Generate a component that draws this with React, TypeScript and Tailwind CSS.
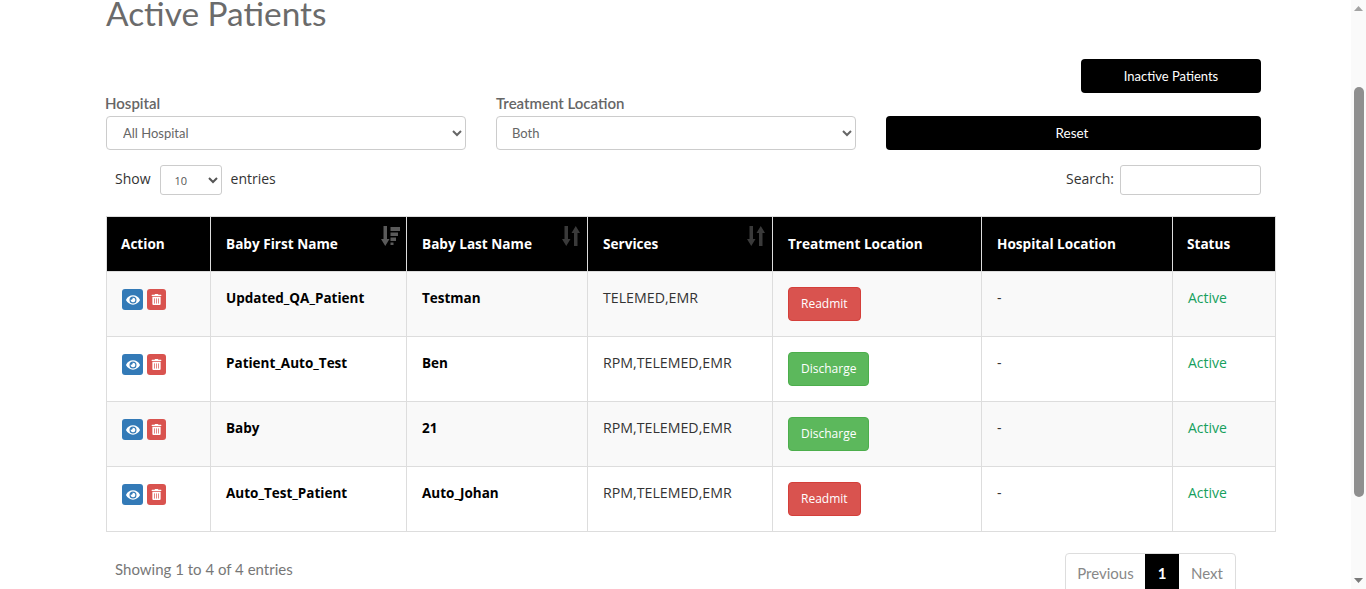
import { FaEye, FaTrashAlt } from 'react-icons/fa';

const rows = [
  { first: 'Updated_QA_Patient', last: 'Testman', services: 'TELEMED,EMR', action: 'Readmit' },
  { first: 'Patient_Auto_Test', last: 'Ben', services: 'RPM,TELEMED,EMR', action: 'Discharge' },
  { first: 'Baby', last: '21', services: 'RPM,TELEMED,EMR', action: 'Discharge' },
  { first: 'Auto_Test_Patient', last: 'Auto_Johan', services: 'RPM,TELEMED,EMR', action: 'Readmit' },
];

function SortIcon() {
  return (
    <svg width="18" height="20" viewBox="0 0 18 20" fill="#3a3a3a">
      <path d="M2.500 0h3.500v13h2.500l-4.250 7L0 13h2.500z" />
      <path d="M12 20h3.500V7H18l-4.250-7L9.500 7H12z" />
    </svg>
  );
}

function SortDownIcon() {
  return (
    <svg width="19" height="20" viewBox="0 0 19 20" fill="#5a5a5a">
      <path d="M2.500 0h3.500v13h2.500l-4.250 7L0 13h2.500z" />
      <path d="M9.500 1H19v4H9.500zM9.500 6.500h7.500v3.500H9.500zM9.500 11.500h5.500V15H9.500zM9.500 16.500h3V19h-3z" />
    </svg>
  );
}

export default function App() {
  return (
    <div className="flex h-[589px] overflow-hidden bg-white font-['Open_Sans',sans-serif] text-[14px] text-[#333]">
      <main className="flex-1 min-w-0 pl-[106px] pr-[75px]">
        <h1 className="-mt-[10px] h-[60px] font-['Lato',sans-serif] text-[33.4px] leading-[46px] text-[#6b6b6b]">Active Patients</h1>

        <div className="flex justify-end pr-[15px] mt-[9px]">
          <button className="h-[34px] w-[180px] rounded bg-black pt-[1px] font-['Lato',sans-serif] text-[13px] text-white">Inactive Patients</button>
        </div>

        <div className="mt-[1px] flex gap-[30px] pr-[15px] font-['Lato',sans-serif]">
          <div className="w-[360px]">
            <label className="-ml-[1px] -mt-[2px] mb-[2px] block h-[22px] text-[15px] font-semibold leading-[22px] text-[#666]">Hospital</label>
            <select className="h-[34px] w-full rounded border border-[#ccc] bg-white pl-3 text-[13px] text-[#666]">
              <option>All Hospital</option>
            </select>
          </div>
          <div className="w-[360px]">
            <label className="-mt-[2px] mb-[2px] block h-[22px] text-[15px] font-semibold leading-[22px] text-[#666]">Treatment Location</label>
            <select className="h-[34px] w-full rounded border border-[#ccc] bg-white pl-[11px] text-[13px] text-[#666]">
              <option>Both</option>
            </select>
          </div>
          <div className="flex flex-1 items-end">
            <button className="h-[34px] w-full rounded bg-black pt-[1px] pr-[3px] text-[13.5px] text-white">Reset</button>
          </div>
        </div>

        <div className="mt-[15px] flex h-[30px] items-center justify-between pl-[9px] pr-[15px] text-[#333]">
          <div className="flex items-center gap-[9px]">
            <span className="-mt-[3px]">Show</span>
            <select className="h-[30px] w-[62px] rounded-[3px] border border-[#ccc] bg-white pl-[10px] text-[11px] text-[#555]">
              <option>10</option>
            </select>
            <span className="-mt-[3px]">entries</span>
          </div>
          <div className="flex items-center gap-[6px]">
            <span className="-mt-[3px]">Search:</span>
            <input className="h-[30px] w-[141px] rounded-[3px] border border-[#ccc] bg-white" />
          </div>
        </div>

        <table className="mt-[21px] w-[1169px] table-fixed border-collapse">
          <colgroup>
            <col className="w-[104px]" />
            <col className="w-[196px]" />
            <col className="w-[181px]" />
            <col className="w-[185px]" />
            <col className="w-[209px]" />
            <col className="w-[191px]" />
            <col className="w-[103px]" />
          </colgroup>
          <thead className="bg-black text-[13.6px] text-white">
            <tr className="h-[55px]">
              <th className="border border-[#ddd] px-[14px] text-left font-bold">Action</th>
              <th className="relative border border-[#ddd] px-[15px] text-left font-bold">
                Baby First Name
                <span className="absolute right-[6px] top-[9px]"><SortDownIcon /></span>
              </th>
              <th className="relative border border-[#ddd] px-[15px] text-left font-bold">
                Baby Last Name
                <span className="absolute right-[7px] top-[9px]"><SortIcon /></span>
              </th>
              <th className="relative border border-[#ddd] px-[15px] text-left font-bold">
                Services
                <span className="absolute right-[7px] top-[9px]"><SortIcon /></span>
              </th>
              <th className="border border-[#ddd] px-[15px] text-left font-bold">Treatment Location</th>
              <th className="border border-[#ddd] px-[15px] text-left font-bold">Hospital Location</th>
              <th className="border border-[#ddd] px-[14px] text-left font-bold">Status</th>
            </tr>
          </thead>
          <tbody>
            {rows.map((row, i) => (
              <tr key={row.first} className={`h-[65px] ${i % 2 === 0 ? 'bg-[#f9f9f9]' : 'bg-white'}`}>
                <td className="border border-[#ddd] px-[15px] align-top pt-[17px]">
                  <div className="flex gap-[4px]">
                    <span className="flex h-[21px] w-[21px] items-center justify-center rounded-[3px] bg-[#337ab7] text-white"><FaEye className="text-[14px]" /></span>
                    <span className="flex h-[21px] w-[19px] items-center justify-center rounded-[3px] bg-[#d9534f] text-white"><FaTrashAlt className="text-[11px]" /></span>
                  </div>
                </td>
                <td className="border border-[#ddd] px-[15px] align-top pt-[16px] text-[13.5px] font-bold text-black">{row.first}</td>
                <td className="border border-[#ddd] px-[15px] align-top pt-[16px] text-[13.5px] font-bold text-black">{row.last}</td>
                <td className="border border-[#ddd] px-[15px] align-top pt-[15px] text-[14.2px]">{row.services}</td>
                <td className="border border-[#ddd] px-[15px] align-top pt-[15px]">
                  <button className={`h-[34px] rounded border px-[12px] text-[12px] text-white ${row.action === 'Readmit' ? 'border-[#d43f3a] bg-[#d9534f]' : 'border-[#4cae4c] bg-[#5cb85c]'}`}>{row.action}</button>
                </td>
                <td className="border border-[#ddd] px-[15px] align-top pt-[15px]">-</td>
                <td className="border border-[#ddd] px-[15px] align-top pt-[15px] text-[#16a05d]">Active</td>
              </tr>
            ))}
          </tbody>
        </table>

        <div className="mt-[21px] flex justify-between pl-[9px] pr-[40px] font-['Lato',sans-serif] text-[15px]">
          <div className="pt-[5px] text-[#777]">Showing 1 to 4 of 4 entries</div>
          <div className="flex h-[40px] overflow-hidden rounded border border-[#ddd] text-[#888]">
            <span className="flex w-[79px] items-center justify-center">Previous</span>
            <span className="flex w-[34px] items-center justify-center bg-black font-bold text-white">1</span>
            <span className="flex w-[56px] items-center justify-center">Next</span>
          </div>
        </div>
      </main>

      <div className="flex w-[15px] shrink-0 flex-col items-center bg-[#fafafa]">
        <span className="flex h-[17px] items-center justify-center text-[#a3a3a3]">
          <svg width="9" height="5" viewBox="0 0 9 5" fill="currentColor"><path d="M4.500 0L9 5H0z" /></svg>
        </span>
        <div className="mt-[70px] h-[410px] w-[10px] rounded-full bg-[#8f8f8f]" />
        <span className="mt-auto flex h-[17px] items-center justify-center text-[#7a7a7a]">
          <svg width="9" height="5" viewBox="0 0 9 5" fill="currentColor"><path d="M0 0h9L4.500 5z" /></svg>
        </span>
      </div>
    </div>
  );
}
